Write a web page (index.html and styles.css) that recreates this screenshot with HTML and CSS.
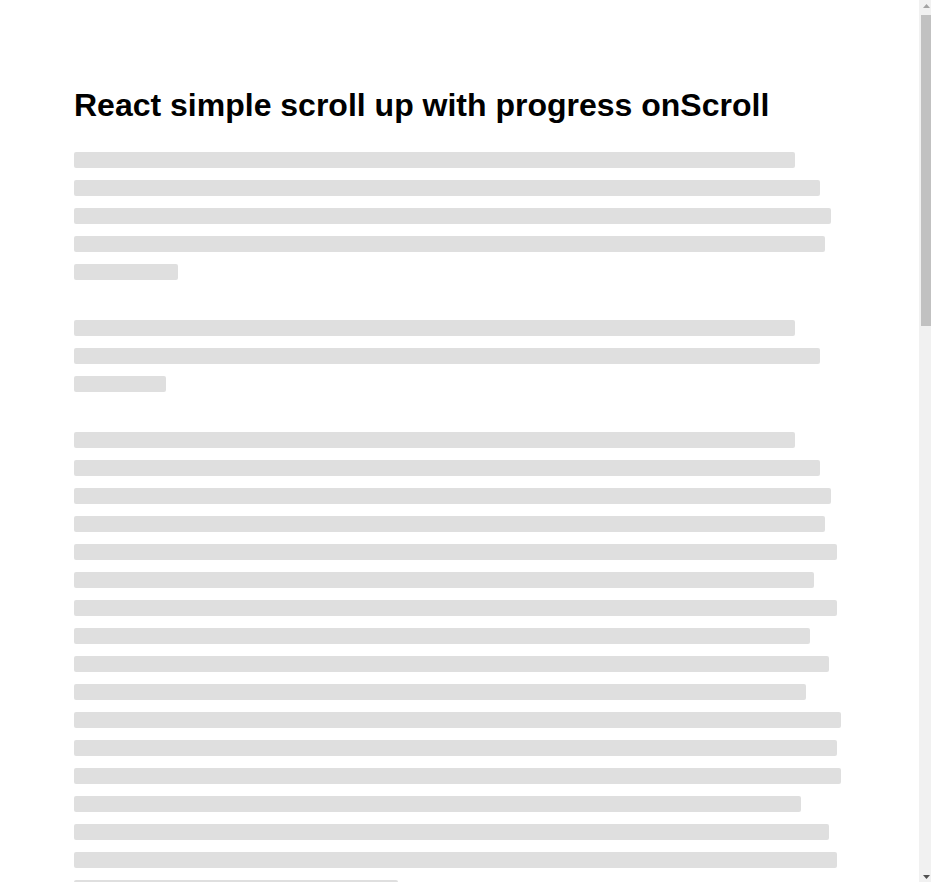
FILE: index.html
```html
<!DOCTYPE html>
<html lang="en">
<head>
<meta charset="utf-8">
<title>React simple scroll up with progress onScroll</title>
<link rel="stylesheet" href="styles.css">
</head>
<body>
<main class="page">
  <h1 class="title">React simple scroll up with progress onScroll</h1>
  <div class="content">
    <div class="para">
      <div class="bar" style="width:721px"></div>
      <div class="bar" style="width:746px"></div>
      <div class="bar" style="width:757px"></div>
      <div class="bar" style="width:751px"></div>
      <div class="bar" style="width:104px"></div>
    </div>
    <div class="para">
      <div class="bar" style="width:721px"></div>
      <div class="bar" style="width:746px"></div>
      <div class="bar" style="width:92px"></div>
    </div>
    <div class="para">
      <div class="bar" style="width:721px"></div>
      <div class="bar" style="width:746px"></div>
      <div class="bar" style="width:757px"></div>
      <div class="bar" style="width:751px"></div>
      <div class="bar" style="width:763px"></div>
      <div class="bar" style="width:740px"></div>
      <div class="bar" style="width:763px"></div>
      <div class="bar" style="width:736px"></div>
      <div class="bar" style="width:755px"></div>
      <div class="bar" style="width:732px"></div>
      <div class="bar" style="width:767px"></div>
      <div class="bar" style="width:763px"></div>
      <div class="bar" style="width:767px"></div>
      <div class="bar" style="width:727px"></div>
      <div class="bar" style="width:755px"></div>
      <div class="bar" style="width:763px"></div>
      <div class="bar" style="width:324px"></div>
    </div>
    <div class="para">
      <div class="bar" style="width:721px"></div>
      <div class="bar" style="width:746px"></div>
      <div class="bar" style="width:757px"></div>
      <div class="bar" style="width:751px"></div>
      <div class="bar" style="width:104px"></div>
    </div>
    <div class="para">
      <div class="bar" style="width:721px"></div>
      <div class="bar" style="width:746px"></div>
      <div class="bar" style="width:757px"></div>
      <div class="bar" style="width:751px"></div>
      <div class="bar" style="width:763px"></div>
      <div class="bar" style="width:740px"></div>
      <div class="bar" style="width:763px"></div>
      <div class="bar" style="width:736px"></div>
      <div class="bar" style="width:755px"></div>
      <div class="bar" style="width:732px"></div>
      <div class="bar" style="width:767px"></div>
      <div class="bar" style="width:763px"></div>
      <div class="bar" style="width:324px"></div>
    </div>
  </div>
</main>
<div class="scrollbar" aria-hidden="true">
  <div class="sb-btn sb-up">
    <svg width="7" height="4" viewBox="0 0 7 4"><polygon points="0,4 3.5,0 7,4" fill="#a3a3a3"/></svg>
  </div>
  <div class="sb-track">
    <div class="sb-thumb"></div>
  </div>
  <div class="sb-btn sb-down">
    <svg width="7" height="4" viewBox="0 0 7 4"><polygon points="0,0 7,0 3.5,4" fill="#505050"/></svg>
  </div>
</div>
</body>
</html>
```

FILE: styles.css
```css
html, body {
  margin: 0;
  padding: 0;
  background: #ffffff;
}

body {
  padding-right: 15px;
}

.page {
  max-width: 768px;
  margin: 0 auto;
  padding: 87px 0 92px;
  font-family: "Liberation Sans", Arial, sans-serif;
}

.title {
  margin: 0 0 28px;
  font-size: 32px;
  font-weight: 700;
  color: #000000;
  line-height: normal;
}

.content {
  display: flex;
  flex-direction: column;
  gap: 40px;
}

.para {
  display: flex;
  flex-direction: column;
  gap: 12px;
}

.bar {
  height: 16px;
  max-width: 100%;
  background: #dfdfdf;
  border-radius: 2px;
}

/* simulated classic scrollbar */
.scrollbar {
  position: fixed;
  top: 0;
  right: 0;
  bottom: 0;
  width: 12px;
  display: flex;
  flex-direction: column;
  background: #f1f1f1;
  z-index: 10;
}

.sb-btn {
  height: 15px;
  flex: 0 0 15px;
  display: flex;
  align-items: flex-start;
  padding-left: 4px;
  box-sizing: border-box;
}

.sb-btn svg {
  display: block;
}

.sb-up {
  padding-top: 4px;
}

.sb-down {
  padding-top: 8px;
}

.sb-track {
  flex: 1;
}

.sb-thumb {
  height: 311px;
  margin-left: 2px;
  background: #c1c1c1;
}
```
